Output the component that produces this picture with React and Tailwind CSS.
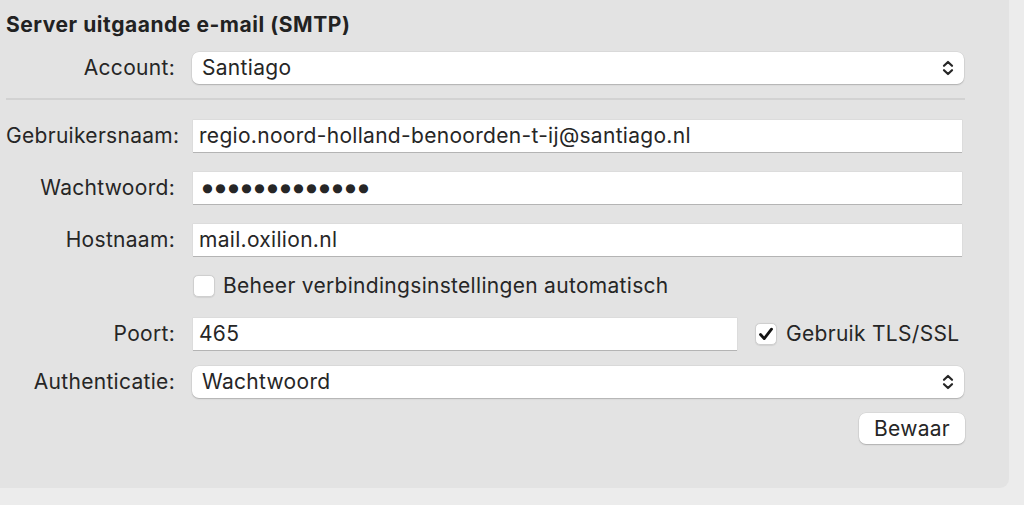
import React from "react";

const Chevrons = () => (
  <svg width="12" height="16" viewBox="0 0 12 16" className="shrink-0">
    <path d="M2 5.8 L6 2 L10 5.8" fill="none" stroke="#262626" strokeWidth="2.2" strokeLinecap="round" strokeLinejoin="round" />
    <path d="M2 10.2 L6 14 L10 10.2" fill="none" stroke="#262626" strokeWidth="2.2" strokeLinecap="round" strokeLinejoin="round" />
  </svg>
);

const Label = ({ children }) => (
  <div className="w-[169px] shrink-0 text-right">{children}</div>
);

const TextField = ({ value, className = "" }) => (
  <div className={`h-8 bg-white flex items-center pl-[6px] shadow-[0_1px_0_rgba(0,0,0,0.18),0_0_0_0.5px_rgba(0,0,0,0.06)] ${className}`}>
    {value}
  </div>
);

const Select = ({ value }) => (
  <div className="h-8 w-[772px] bg-white rounded-[7px] flex items-center justify-between pl-[10px] pr-[10px] shadow-[0_1px_1.5px_rgba(0,0,0,0.2),0_0_0_0.5px_rgba(0,0,0,0.08)]">
    <span>{value}</span>
    <Chevrons />
  </div>
);

const Checkbox = ({ checked }) => (
  <div className="w-[22px] h-[22px] bg-white rounded-[5px] border border-[#cfcfcf] flex items-center justify-center shadow-[0_0.5px_1px_rgba(0,0,0,0.08)] shrink-0">
    {checked && (
      <svg width="18" height="18" viewBox="0 0 18 18">
        <path d="M3.5 9.5 L7.2 13.6 L14.5 4.2" fill="none" stroke="#141414" strokeWidth="2.8" strokeLinecap="round" strokeLinejoin="round" />
      </svg>
    )}
  </div>
);

const dots = Array.from({ length: 13 });

export default function App() {
  return (
    <div
      className="w-[1024px] h-[505px] bg-[#ececec] text-[#262626] text-[21px] tracking-[0.3px] leading-6 overflow-hidden"
      style={{ fontFamily: "Inter, 'Noto Sans', sans-serif" }}
    >
      <div className="w-[1009px] h-[488px] bg-[#e3e3e3] rounded-br-[9px] pl-[6px] pt-[13px]">
        <div className="h-6 font-bold text-[#222222] tracking-[0.55px]">Server uitgaande e-mail (SMTP)</div>

        <div className="mt-[15px] flex items-center gap-[17px]">
          <Label>Account:</Label>
          <Select value="Santiago" />
        </div>

        <div className="mt-[14px] h-[2px] w-[959px] bg-[#d2d2d2]" />

        <div className="mt-[20px] flex items-center gap-[18px]">
          <Label>Gebruikersnaam:</Label>
          <TextField value="regio.noord-holland-benoorden-t-ij@santiago.nl" className="w-[769px]" />
        </div>

        <div className="mt-[20px] flex items-center gap-[18px]">
          <Label>Wachtwoord:</Label>
          <TextField
            value={
              <span className="flex pl-[2px]">
                {dots.map((_, i) => (
                  <span key={i} className="inline-block w-[13px] text-center text-[12px] leading-none tracking-normal" style={{ fontFamily: "'DejaVu Sans', sans-serif" }}>●</span>
                ))}
              </span>
            }
            className="w-[769px]"
          />
        </div>

        <div className="mt-[20px] flex items-center gap-[18px]">
          <Label>Hostnaam:</Label>
          <TextField value="mail.oxilion.nl" className="w-[769px]" />
        </div>

        <div className="mt-[19px] flex items-center pl-[187px] gap-[8px] h-[22px]">
          <Checkbox />
          <span>Beheer verbindingsinstellingen automatisch</span>
        </div>

        <div className="mt-[21px] flex items-center gap-[18px]">
          <Label>Poort:</Label>
          <TextField value="465" className="w-[544px]" />
          <div className="flex items-center gap-[9px]">
            <Checkbox checked />
            <span>Gebruik TLS/SSL</span>
          </div>
        </div>

        <div className="mt-[16px] flex items-center gap-[17px]">
          <Label>Authenticatie:</Label>
          <Select value="Wachtwoord" />
        </div>

        <div className="mt-[15px] w-[959px] flex justify-end">
          <div className="h-[31px] w-[106px] bg-white rounded-[7px] flex items-center justify-center shadow-[0_1px_1.5px_rgba(0,0,0,0.2),0_0_0_0.5px_rgba(0,0,0,0.08)]">
            Bewaar
          </div>
        </div>
      </div>
    </div>
  );
}
